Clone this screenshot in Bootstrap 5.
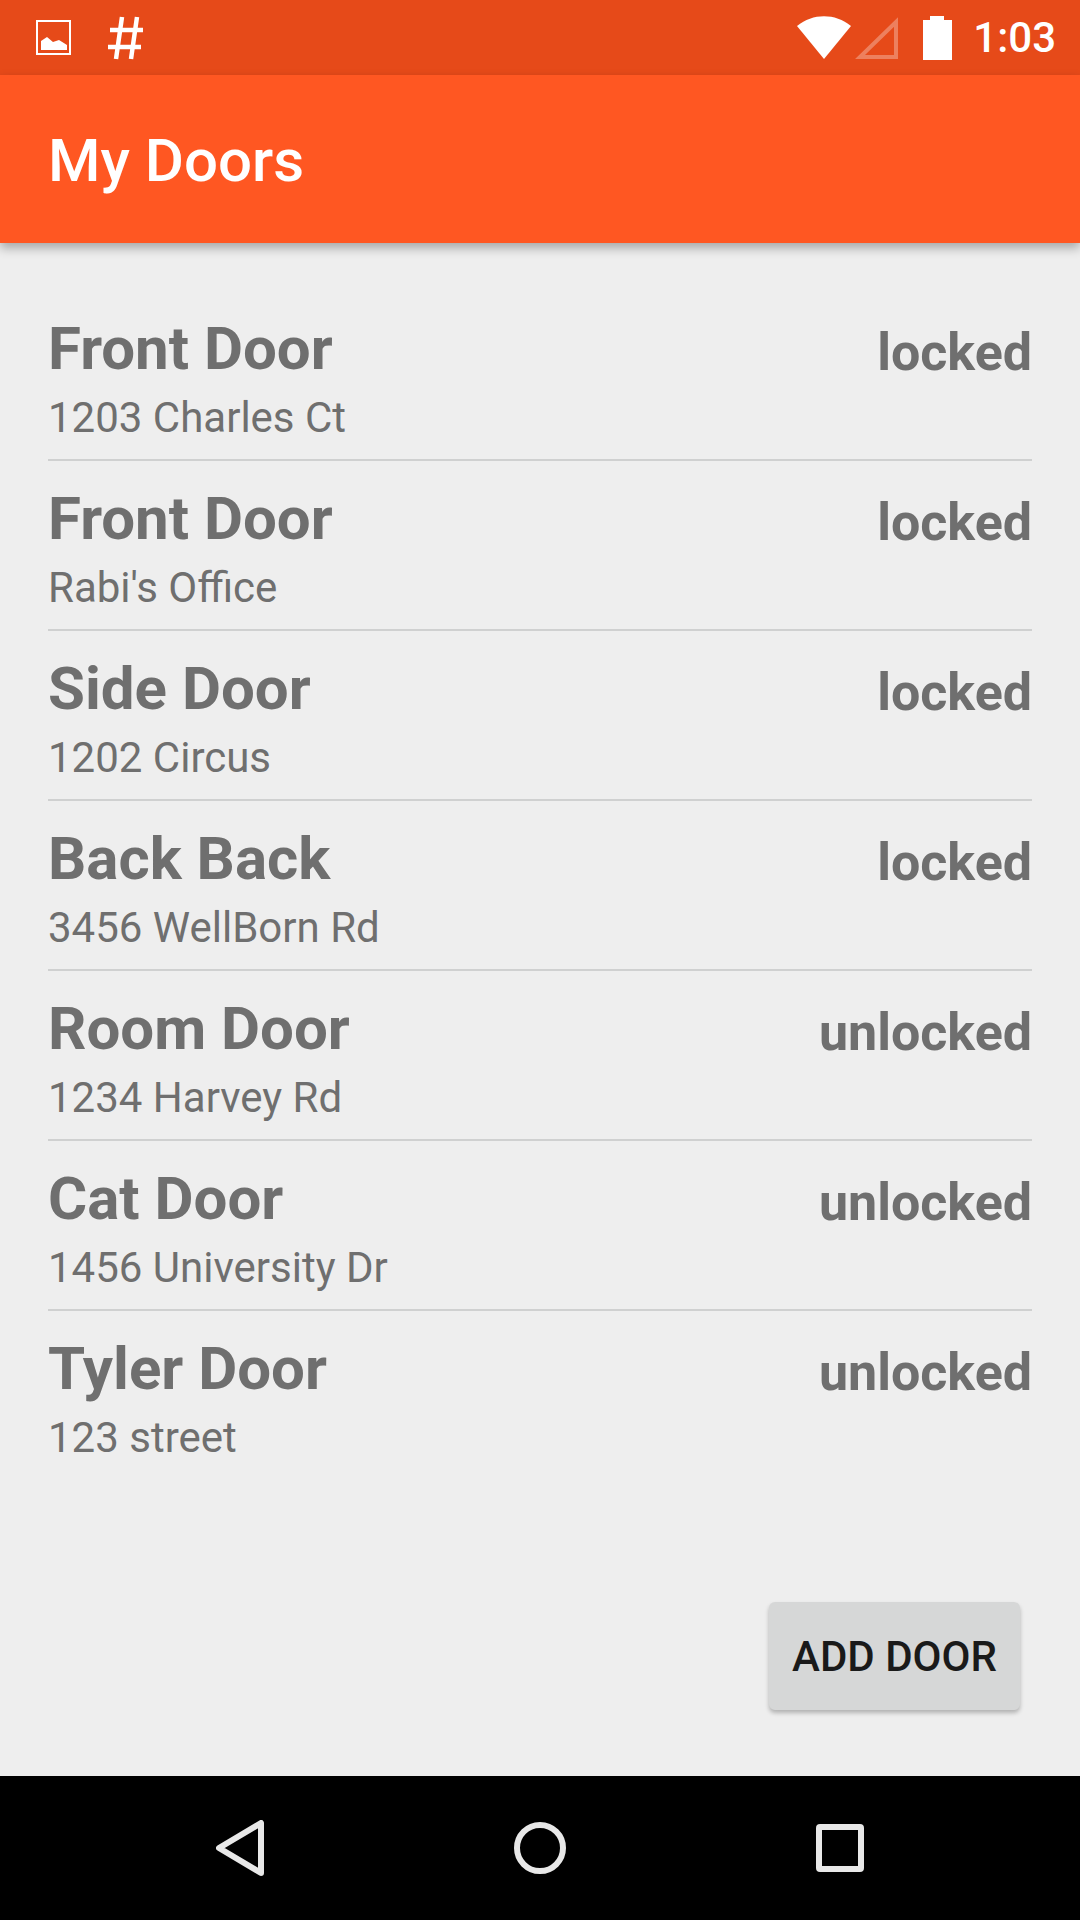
<!DOCTYPE html>
<html lang="en">
<head>
    <meta charset="UTF-8">
    <meta name="viewport" content="width=device-width, initial-scale=1.0">
    <title>My Doors</title>

    <!-- Bootstrap 5 CSS -->
    <link href="https://cdn.jsdelivr.net/npm/bootstrap@5.3.0/dist/css/bootstrap.min.css" rel="stylesheet">

    <!-- Custom Styles -->
    <style>
        body {
            font-family: Roboto, sans-serif;
            background-color: #eeeeee;
        }
        .phone {
            width: 1080px;
            height: 1920px;
        }
        .status-bar {
            height: 75px;
            background-color: #e64a19;
            color: white;
            padding: 0 24px 0 36px;
        }
        .status-time {
            margin-left: 21px;
            font-size: 42px;
            font-weight: 500;
            line-height: 1;
        }
        .hash-icon {
            margin-left: 37px;
        }
        .app-bar {
            height: 168px;
            background-color: #ff5722;
            color: white;
            padding: 3px 0 0 48px;
            font-size: 60px;
            font-weight: 500;
            box-shadow: 0 5px 10px rgba(0, 0, 0, 0.3);
            position: relative;
        }
        .door-list {
            padding: 48px 48px 0;
        }
        .door-row {
            height: 170px;
            color: #6f6f6f;
            border-bottom: 2px solid #cfd0d0;
        }
        .door-row:last-child {
            border-bottom: 0;
        }
        .door-name {
            font-size: 60px;
            font-weight: 700;
            line-height: 70px;
            padding-top: 23px;
        }
        .door-place {
            font-size: 42px;
            line-height: 49px;
            margin-top: 9px;
        }
        .door-state {
            font-size: 52px;
            font-weight: 700;
            line-height: 60px;
            padding-top: 32px;
        }
        .btn-add {
            width: 251px;
            height: 108px;
            margin-right: 12px;
            background-color: #d6d7d7;
            color: #1a1a1a;
            font-size: 42px;
            font-weight: 500;
            border: 0;
            border-radius: 6px;
            box-shadow: 0 3px 4px rgba(0, 0, 0, 0.25);
        }
        .nav-bottom {
            height: 144px;
            margin-top: 66px;
            background-color: black;
        }
        .back-icon { margin-left: 216px; }
        .home-icon { margin-left: 250px; }
        .recent-icon { margin-left: 250px; }
    </style>
</head>
<body>
    <div class="phone d-flex flex-column">
        <!-- Status bar -->
        <div class="status-bar d-flex align-items-center">
            <svg width="35" height="35" viewBox="0 0 35 35" fill="white">
                <path fill-rule="evenodd" d="M0 0h35v35H0zM2 2v31h31V2z"/>
                <path d="M5 30V21l6-4 6 5 6-2 8 5v5z"/>
            </svg>
            <svg class="hash-icon" width="35" height="44" viewBox="0 0 35 44" fill="none" stroke="white" stroke-width="4.5">
                <path d="M14 1 8 43M29 1 23 43M2 14h33M0 31h33"/>
            </svg>
            <div class="ms-auto d-flex align-items-center">
                <svg width="54" height="44" viewBox="0 0 54 44" fill="white">
                    <path d="M0 10C16-3 38-3 54 10L27 43z"/>
                </svg>
                <svg class="ms-1" width="44" height="44" viewBox="0 0 44 44" fill="none" stroke="white" stroke-opacity="0.3" stroke-width="4">
                    <path d="M41 6V41H5z"/>
                </svg>
                <svg class="ms-4" width="29" height="44" viewBox="0 0 29 44" fill="white">
                    <path d="M7 0h14v4h8v40H0V4h7z"/>
                </svg>
                <span class="status-time">1:03</span>
            </div>
        </div>

        <!-- App bar -->
        <div class="app-bar d-flex align-items-center">My Doors</div>

        <!-- Doors -->
        <div class="door-list flex-grow-1" id="doors"></div>

        <!-- Add button -->
        <div class="d-flex justify-content-end px-5">
            <button class="btn btn-add p-0">ADD DOOR</button>
        </div>

        <!-- Navigation bar -->
        <div class="nav-bottom d-flex align-items-center">
            <svg class="back-icon" width="48" height="56" viewBox="0 0 48 56" fill="none" stroke="#e8e8e8" stroke-width="6" stroke-linejoin="round">
                <path d="M45 3V53L3 28z"/>
            </svg>
            <svg class="home-icon" width="52" height="52" viewBox="0 0 52 52" fill="none" stroke="#e8e8e8" stroke-width="6">
                <circle cx="26" cy="26" r="23"/>
            </svg>
            <svg class="recent-icon" width="48" height="48" viewBox="0 0 48 48" fill="none" stroke="#e8e8e8" stroke-width="6" stroke-linejoin="round">
                <rect x="3" y="3" width="42" height="42" rx="1"/>
            </svg>
        </div>
    </div>

    <!-- Bootstrap JS Bundle -->
    <script src="https://cdn.jsdelivr.net/npm/bootstrap@5.3.0/dist/js/bootstrap.bundle.min.js"></script>

    <script>
        const doors = [
            ["Front Door", "1203 Charles Ct", "locked"],
            ["Front Door", "Rabi's Office", "locked"],
            ["Side Door", "1202 Circus", "locked"],
            ["Back Back", "3456 WellBorn Rd", "locked"],
            ["Room Door", "1234 Harvey Rd", "unlocked"],
            ["Cat Door", "1456 University Dr", "unlocked"],
            ["Tyler Door", "123 street", "unlocked"]
        ];
        document.getElementById("doors").innerHTML = doors.map(d => `
            <div class="door-row d-flex justify-content-between">
                <div>
                    <div class="door-name">${d[0]}</div>
                    <div class="door-place">${d[1]}</div>
                </div>
                <div class="door-state">${d[2]}</div>
            </div>`).join("");
    </script>
</body>
</html>
